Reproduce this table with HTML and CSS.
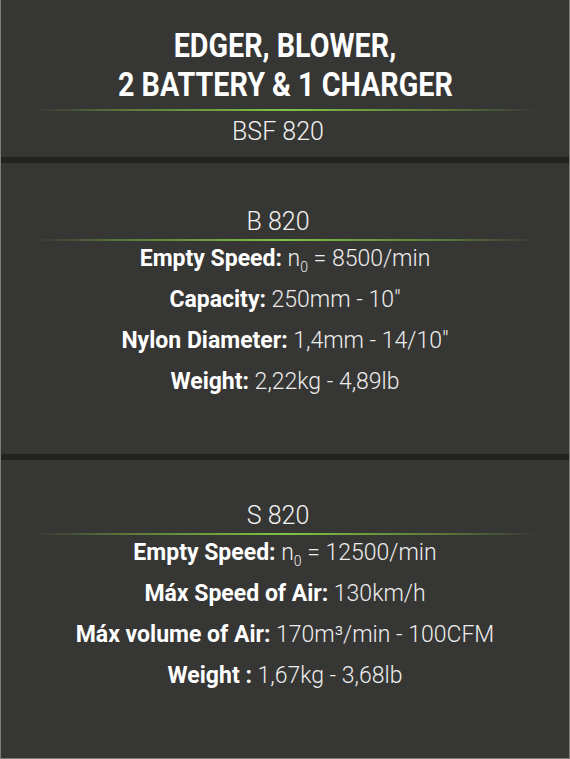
FILE: index.html
```html
<!DOCTYPE html>
<html lang="en">
<head>
<meta charset="utf-8">
<title>BSF 820</title>
<link rel="stylesheet" href="styles.css">
</head>
<body>
<div class="card">
  <section class="head">
    <h1 class="title"><span class="title-line">EDGER, BLOWER,</span><span class="title-line">2 BATTERY &amp; 1 CHARGER</span></h1>
    <div class="glow"></div>
    <div class="model">BSF 820</div>
  </section>
  <div class="band"></div>
  <section class="spec spec-b">
    <div class="model">B 820</div>
    <div class="glow"></div>
    <ul class="rows">
      <li class="row"><b class="label">Empty Speed:</b> n<sub class="sub">0</sub> = 8500/min</li>
      <li class="row"><b class="label">Capacity:</b> 250mm - 10"</li>
      <li class="row"><b class="label">Nylon Diameter:</b> 1,4mm - 14/10"</li>
      <li class="row"><b class="label">Weight:</b> 2,22kg - 4,89lb</li>
    </ul>
  </section>
  <div class="band"></div>
  <section class="spec spec-s">
    <div class="model">S 820</div>
    <div class="glow"></div>
    <ul class="rows">
      <li class="row"><b class="label">Empty Speed:</b> n<sub class="sub">0</sub> = 12500/min</li>
      <li class="row"><b class="label">Máx Speed of Air:</b> 130km/h</li>
      <li class="row"><b class="label">Máx volume of Air:</b> 170m³/min - 100CFM</li>
      <li class="row"><b class="label">Weight :</b> 1,67kg - 3,68lb</li>
    </ul>
  </section>
</div>
</body>
</html>
```
FILE: styles.css
```css
* { box-sizing: border-box; }
html, body { margin: 0; padding: 0; background: #363634; }
body {
  width: 570px;
  height: 759px;
  font-family: Roboto, "Liberation Sans", sans-serif;
  color: #ffffff;
}
.card {
  height: 759px;
  display: flex;
  flex-direction: column;
  background: #363634;
  border-left: 1px solid #7c7c7a;
  border-right: 1px solid #7c7c7a;
  border-bottom: 1px solid #7c7c7a;
}
.head {
  padding: 26px 0 11px;
  text-align: center;
}
.title {
  margin: 0;
  font-size: 33px;
  line-height: 39px;
  font-weight: 700;
  display: flex;
  flex-direction: column;
  align-items: center;
}
.title-line {
  display: block;
  white-space: nowrap;
  transform: scaleX(0.87);
}
.glow {
  height: 2px;
  margin: 5px 30px 0;
  background: linear-gradient(to right, rgba(90,130,50,0) 0%, #5a763a 18%, #80c443 50%, #5a763a 82%, rgba(90,130,50,0) 100%);
}
.model {
  font-size: 25px;
  line-height: 28px;
  font-weight: 300;
  text-align: center;
  color: #f2f2f2;
  padding-right: 14px;
}
.head .model {
  margin-top: 7px;
}
.band {
  height: 6px;
  background: #222221;
}
.spec .glow { margin-top: 3px; }
.spec-b { padding: 45px 0 55px; }
.spec-s { padding-top: 42px; flex: 1; }
.rows {
  list-style: none;
  margin: 1px 0 0;
  padding: 0;
  display: flex;
  flex-direction: column;
  gap: 7px;
}
.row {
  font-size: 23px;
  line-height: 34px;
  font-weight: 300;
  text-align: center;
  color: #ededed;
  white-space: nowrap;
}
.label {
  font-weight: 700;
  color: #ffffff;
}
.sub {
  font-size: 14px;
  line-height: 0;
  vertical-align: -6px;
}
```
